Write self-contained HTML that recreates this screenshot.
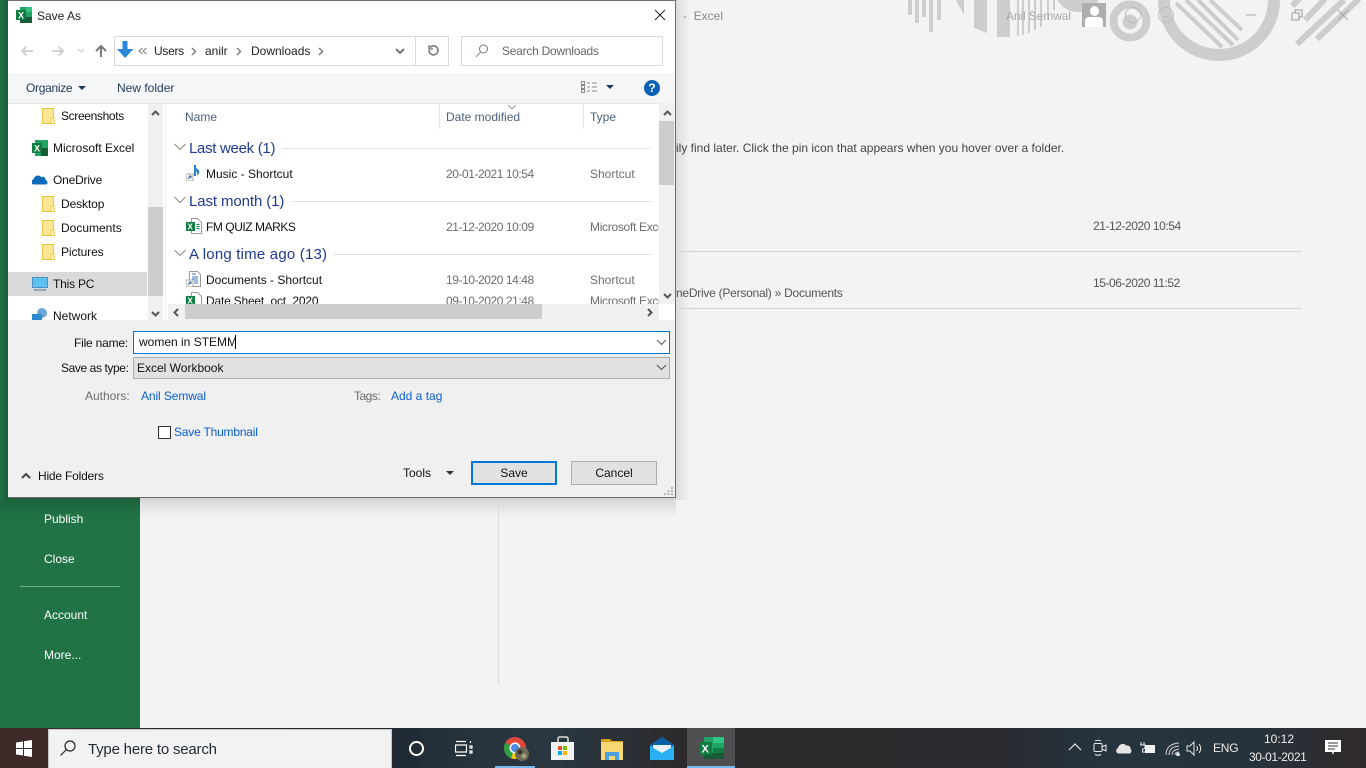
<!DOCTYPE html>
<html><head><meta charset="utf-8"><title>Save As</title>
<style>
html,body{margin:0;padding:0;width:1366px;height:768px;overflow:hidden;background:#f3f3f3;font-family:"Liberation Sans",sans-serif;font-size:12px;color:#222}
div,svg{position:absolute}
.t{position:absolute;white-space:nowrap;line-height:16px;height:16px}
.g{color:#6d6d6d}.b{color:#0a5fd0}.h{color:#1f3a93;font-size:15px;line-height:18px;height:18px}
.d{letter-spacing:-.44px}
.w{color:#fff}
.l{position:absolute;height:1px;background:#e2e2e2}
.btn{position:absolute;background:#e1e1e1;box-sizing:border-box;text-align:center;line-height:20px}
</style></head><body>

<!-- Excel backstage -->
<div style="left:0;top:0;width:140px;height:728px;background:#217346"></div>
<div style="left:140px;top:497px;width:536px;height:20px;background:linear-gradient(#d4d4d4,#f3f3f3)"></div>
<div style="left:0;top:497px;width:140px;height:20px;background:linear-gradient(#1b5f3a,#217346)"></div>
<div style="left:676px;top:0;width:14px;height:500px;background:linear-gradient(90deg,#dcdcdc,#f3f3f3)"></div>
<div style="left:0;top:0;width:8px;height:500px;background:linear-gradient(90deg,#217346,#1a5c38)"></div>
<div class="t w" style="left:44px;top:511px">Publish</div>
<div class="t w" style="left:44px;top:551px">Close</div>
<div style="left:20px;top:586px;width:100px;height:1px;background:#6fae8c"></div>
<div class="t w" style="left:44px;top:607px">Account</div>
<div class="t w" style="left:44px;top:647px">More...</div>
<div style="left:498px;top:497px;width:1px;height:188px;background:#dcdcdc"></div>

<svg style="left:900px;top:0" width="466" height="70" fill="#cdcdcd">
<rect x="8" width="4" height="15"/><rect x="15" width="4" height="23"/><rect x="22" width="4" height="17"/><rect x="29" width="4" height="32"/><rect x="37" width="4" height="20"/>
<path d="M56 0h8v15zM74 0h13v33l-13-5zM97 0h13v37h-13zM117 0h2v36h-2zM122 0h2v35h-2zM128 0h2v33h-2zM134 0h2v30h-2zM140 0h2v27h-2zM147 0h2v20h-2zM153 0h2v10h-2z"/>
<circle cx="178" cy="-12" r="24"/>
<circle cx="230" cy="21" r="16.500" fill="none" stroke="#cdcdcd" stroke-width="8"/><circle cx="230" cy="22" r="7.500"/>
<circle cx="319" cy="0" r="55" fill="none" stroke="#cdcdcd" stroke-width="12"/>
<g stroke="#cdcdcd" stroke-width="4" fill="none"><path d="M276 3l46 44M286 0l47 45M298 0l40 40M310 0l32 30"/></g>
<g stroke="#cdcdcd" stroke-width="6" fill="none"><path d="M392 6l8-8M405 20l20-21M397 44l47-44M417 39l42-40"/></g>
</svg>
<div class="t" style="left:683px;top:8px;color:#8a8a8a">- &nbsp;Excel</div>
<div class="t" style="left:1006px;top:8px;color:#aaa;letter-spacing:-.1px">Anil Semwal</div>
<div style="left:1082px;top:3px;width:24px;height:24px;background:#aeaeae;overflow:hidden"><div style="left:8px;top:3px;width:9px;height:10px;border-radius:50%;background:#fff"></div><div style="left:3px;top:14px;width:18px;height:10px;background:#fff;border-radius:4px 4px 0 0"></div></div>
<svg style="left:1120px;top:5px" width="230" height="22" fill="none" stroke="#bdbdbd"><circle cx="13" cy="10" r="7.500"/><circle cx="46" cy="10" r="7.500"/><path d="M42 13q4-3 8 0"/><path d="M126 10h10" stroke="#aaa"/><path d="M172 8h7v7h-7zM175 8V5h7v7h-3" stroke="#999"/><path d="M218 5l10 10M228 5l-10 10" stroke="#aaa"/></svg>

<div class="t" style="left:676px;top:140px;color:#444">ily find later. Click the pin icon that appears when you hover over a folder.</div>
<div class="t d" style="left:1093px;top:218px;color:#555">21-12-2020 10:54</div>
<div class="l" style="left:676px;top:251px;width:626px;background:#d4d4d4"></div>
<div class="t" style="left:676px;top:285px;color:#555;letter-spacing:-.25px">neDrive (Personal) » Documents</div>
<div class="t d" style="left:1093px;top:275px;color:#555">15-06-2020 11:52</div>
<div class="l" style="left:676px;top:308px;width:626px;background:#d4d4d4"></div>

<!-- Dialog -->
<div style="left:8px;top:0;width:668px;height:498px;background:#fff;box-sizing:border-box;border:1px solid #6b6b6b;border-left:0;border-top:1px solid #707070;border-bottom:1px solid #6b6b6b"></div>
<svg style="left:16px;top:7px" width="16" height="16"><rect x="4" width="12" height="16" fill="#21a366"/><rect x="10" width="6" height="5" fill="#33c481"/><rect x="10" y="5" width="6" height="5" fill="#21a366"/><rect x="4" y="10" width="12" height="6" fill="#185c37"/><rect x="0" y="3" width="10" height="10" fill="#107c41"/><text x="2" y="11.500" font-size="9" font-weight="700" fill="#fff" font-family="Liberation Sans">X</text></svg>
<div class="t" style="left:37px;top:8px">Save As</div>
<svg style="left:654px;top:9px" width="12" height="12" stroke="#222" fill="none"><path d="M1 1l10 10M11 1L1 11"/></svg>

<svg style="left:18px;top:42px" width="92" height="18" fill="none"><path d="M4 9h11M8.500 4.500L4 9l4.500 4.500" stroke="#d2d2d2" stroke-width="2"/><path d="M34 9h11M40.500 4.500L45 9l-4.500 4.500" stroke="#d2d2d2" stroke-width="2"/><path d="M60 7l3 3 3-3" stroke="#d8d8d8" stroke-width="1.500"/><path d="M83 15V4M78 9l5-5 5 5" stroke="#7a7a7a" stroke-width="2"/></svg>
<div style="left:114px;top:36px;width:335px;height:30px;box-sizing:border-box;border:1px solid #d9d9d9"></div>
<div style="left:415px;top:36px;width:1px;height:30px;background:#d9d9d9"></div>
<svg style="left:117px;top:41px" width="17" height="18"><path d="M5.500 0h5v8h6L8 17 0 8h5.500z" fill="#2b88d8"/></svg>
<svg style="left:138px;top:47px" width="10" height="9" fill="none" stroke="#777"><path d="M4.500 1L1 4l3.500 3M8.500 1L5 4l3.500 3"/></svg>
<div class="t" style="left:154px;top:43px;letter-spacing:-.3px">Users</div>
<svg style="left:191px;top:47px" width="6" height="9" fill="none" stroke="#808080" stroke-width="1.500"><path d="M1 1l3.500 3.500L1 8"/></svg>
<div class="t" style="left:205px;top:43px">anilr</div>
<svg style="left:236px;top:47px" width="6" height="9" fill="none" stroke="#808080" stroke-width="1.500"><path d="M1 1l3.500 3.500L1 8"/></svg>
<div class="t" style="left:251px;top:43px">Downloads</div>
<svg style="left:318px;top:47px" width="6" height="9" fill="none" stroke="#808080" stroke-width="1.500"><path d="M1 1l3.500 3.500L1 8"/></svg>
<svg style="left:395px;top:48px" width="10" height="7" fill="none" stroke="#666" stroke-width="1.700"><path d="M1 1l4 4 4-4"/></svg>
<svg style="left:427px;top:44px" width="12" height="14" fill="none" stroke="#707070" stroke-width="1.500"><path d="M3 3.500a4.500 4.500 0 1 1-1 2.500"/><path d="M2 1v4h4" stroke-width="1.200"/></svg>
<div style="left:461px;top:36px;width:202px;height:30px;box-sizing:border-box;border:1px solid #d9d9d9"></div>
<svg style="left:475px;top:44px" width="14" height="14" fill="none" stroke="#777"><circle cx="8.500" cy="5" r="4"/><path d="M5.500 8L1 13" stroke="#a08a80"/></svg>
<div class="t" style="left:502px;top:43px;color:#666;letter-spacing:-.25px">Search Downloads</div>

<div style="left:8px;top:73px;width:667px;height:30px;background:#f5f6f7;border-bottom:1px solid #e5e5e5"></div>
<div class="t" style="left:26px;top:80px;color:#1e395b;letter-spacing:-.3px">Organize</div>
<svg style="left:78px;top:86px" width="9" height="5"><path d="M0 0h8L4 4z" fill="#1e395b"/></svg>
<div class="t" style="left:117px;top:80px;color:#1e395b">New folder</div>
<svg style="left:581px;top:81px" width="17" height="13" fill="none" stroke="#8a8a8a"><rect x=".5" y=".5" width="3" height="3"/><rect x=".5" y="4.500" width="3" height="3"/><rect x=".5" y="8.500" width="3" height="3"/><path d="M6 2h3M11 2h5M6 6h3M11 6h5M6 10h3M11 10h5"/></svg>
<svg style="left:606px;top:85px" width="9" height="5"><path d="M0 0h8L4 4z" fill="#1e395b"/></svg>
<div style="left:644px;top:80px;width:16px;height:16px;border-radius:50%;background:#0b63b5;color:#fff;font-weight:700;font-size:12px;text-align:center;line-height:16px">?</div>

<!-- Nav pane -->
<div style="left:8px;top:272px;width:139px;height:24px;background:#d9d9d9"></div>
<div style="left:148px;top:104px;width:15px;height:216px;background:#f0f0f0"></div>
<div style="left:148px;top:207px;width:15px;height:89px;background:#cdcdcd"></div>
<div style="left:165px;top:104px;width:1px;height:216px;background:#efefef"></div>
<svg style="left:151px;top:110px" width="9" height="6" fill="none" stroke="#555" stroke-width="2"><path d="M1 5l3.500-3.500L8 5"/></svg>
<svg style="left:151px;top:311px" width="9" height="6" fill="none" stroke="#555" stroke-width="2"><path d="M1 1l3.500 3.500L8 1"/></svg>

<svg style="left:42px;top:108px" width="14" height="16"><path d="M.5.500h11v15H.500z" fill="#ffe792" stroke="#e8c24f"/><path d="M9 10h3.500v5.500H9z" fill="#fff0b8" stroke="#e8c24f" stroke-width=".7"/></svg>
<div class="t" style="left:61px;top:108px;color:#111;letter-spacing:-.35px">Screenshots</div>
<svg style="left:32px;top:140px" width="16" height="16"><rect x="3" width="13" height="16" fill="#21a366"/><rect x="9" y="8" width="7" height="8" fill="#185c37"/><rect y="3" width="10" height="10" fill="#107c41"/><text x="2" y="11.500" font-size="9" font-weight="700" fill="#fff" font-family="Liberation Sans">X</text></svg>
<div class="t" style="left:53px;top:140px;color:#111">Microsoft Excel</div>
<svg style="left:32px;top:174px" width="16" height="11"><path d="M2 10.500a2.500 2.500 0 0 1-.5-5C2 2 7 0 9 3c3-1 5 1 4.500 3 2 0 3 4 .5 4.500z" fill="#0f6cbd"/></svg>
<div class="t" style="left:53px;top:172px;color:#111;letter-spacing:-.2px">OneDrive</div>
<svg style="left:42px;top:196px" width="14" height="16"><path d="M.5.500h11v15H.500z" fill="#ffe792" stroke="#e8c24f"/><path d="M9 10h3.500v5.500H9z" fill="#fff0b8" stroke="#e8c24f" stroke-width=".7"/></svg>
<div class="t" style="left:61px;top:196px;color:#111;letter-spacing:-.1px">Desktop</div>
<svg style="left:42px;top:220px" width="14" height="16"><path d="M.5.500h11v15H.500z" fill="#ffe792" stroke="#e8c24f"/><path d="M9 10h3.500v5.500H9z" fill="#fff0b8" stroke="#e8c24f" stroke-width=".7"/></svg>
<div class="t" style="left:61px;top:220px;color:#111">Documents</div>
<svg style="left:42px;top:244px" width="14" height="16"><path d="M.5.500h11v15H.500z" fill="#ffe792" stroke="#e8c24f"/><path d="M9 10h3.500v5.500H9z" fill="#fff0b8" stroke="#e8c24f" stroke-width=".7"/></svg>
<div class="t" style="left:61px;top:244px;color:#111;letter-spacing:-.1px">Pictures</div>
<svg style="left:32px;top:277px" width="16" height="15"><rect x=".5" y=".5" width="15" height="10" fill="#5cc0f0" stroke="#4a90c0"/><path d="M2 13h12" stroke="#7a93a8" stroke-width="1.500"/></svg>
<div class="t" style="left:53px;top:276px;color:#111;letter-spacing:-.2px">This PC</div>
<div style="left:32px;top:308px;width:16px;height:12px;overflow:hidden"><svg style="left:0;top:0" width="16" height="14"><circle cx="10" cy="5" r="5" fill="#6fa8d8"/><rect y="6" width="10" height="8" fill="#2e8ad0"/></svg></div>
<div class="t" style="left:53px;top:308px;color:#111">Network</div>

<!-- List -->
<div class="t" style="left:185px;top:109px;color:#4c607a">Name</div>
<div style="left:439px;top:104px;width:1px;height:25px;background:#e5e5e5"></div>
<div class="t" style="left:446px;top:109px;color:#4c607a">Date modified</div>
<svg style="left:507px;top:105px" width="10" height="5" fill="none" stroke="#999"><path d="M1 0l4 4 4-4"/></svg>
<div style="left:583px;top:104px;width:1px;height:25px;background:#e5e5e5"></div>
<div class="t" style="left:590px;top:109px;color:#4c607a">Type</div>

<svg style="left:174px;top:143px" width="12" height="8" fill="none" stroke="#8a8a8a"><path d="M.5 1l5.500 5.500L11.500 1"/></svg>
<div class="t h" style="left:189px;top:140px;letter-spacing:-.3px">Last week (1)</div>
<div class="l" style="left:282px;top:148px;width:369px"></div>
<svg style="left:186px;top:164px" width="16" height="17"><path d="M9 1v11" stroke="#2a7fd0" stroke-width="2"/><path d="M9 1q1 4 4 5q1 3-2 6q1-4-2-6z" fill="#2a7fd0"/><rect y="10" width="7" height="7" fill="#fff" stroke="#aaa"/><path d="M2 15l3-3M3 12h2v2" stroke="#2a5fa0" fill="none"/></svg>
<div class="t" style="left:206px;top:166px;color:#111">Music - Shortcut</div>
<div class="t g d" style="left:446px;top:166px">20-01-2021 10:54</div>
<div class="t g" style="left:590px;top:166px">Shortcut</div>

<svg style="left:174px;top:196px" width="12" height="8" fill="none" stroke="#8a8a8a"><path d="M.5 1l5.500 5.500L11.500 1"/></svg>
<div class="t h" style="left:189px;top:193px;letter-spacing:-.1px">Last month (1)</div>
<div class="l" style="left:291px;top:201px;width:360px"></div>
<svg style="left:186px;top:218px" width="16" height="16"><path d="M5.500.500h6l4 4v11h-10z" fill="#fff" stroke="#9a9a9a"/><rect y="4" width="9" height="9" fill="#107c41"/><text x="1.500" y="11.500" font-size="8" font-weight="700" fill="#fff" font-family="Liberation Sans">X</text><path d="M10.500 6.500h3M10.500 8.500h3M10.500 10.500h3" stroke="#107c41"/></svg>
<div class="t" style="left:206px;top:219px;color:#111;letter-spacing:-.45px">FM QUIZ MARKS</div>
<div class="t g d" style="left:446px;top:219px">21-12-2020 10:09</div>
<div style="left:590px;top:219px;width:69px;height:16px;overflow:hidden"><div class="t g" style="left:0;top:0;letter-spacing:-.3px">Microsoft Excel Worksheet</div></div>

<svg style="left:174px;top:249px" width="12" height="8" fill="none" stroke="#8a8a8a"><path d="M.5 1l5.500 5.500L11.500 1"/></svg>
<div class="t h" style="left:189px;top:246px;letter-spacing:.2px">A long time ago (13)</div>
<div class="l" style="left:334px;top:254px;width:317px"></div>
<svg style="left:186px;top:271px" width="16" height="16"><path d="M3.500.500h8l3 3v12h-11z" fill="#fff" stroke="#9a9a9a"/><path d="M6 3h4M6 6h6M6 8h6M8 10h4M8 12h4" stroke="#3a78c0"/><rect y="9" width="7" height="7" fill="#fff" stroke="#aaa"/><path d="M2 14l3-3M3 11h2v2" stroke="#2a5fa0" fill="none"/></svg>
<div class="t" style="left:206px;top:272px;color:#111">Documents - Shortcut</div>
<div class="t g d" style="left:446px;top:272px">19-10-2020 14:48</div>
<div class="t g" style="left:590px;top:272px">Shortcut</div>

<div style="left:168px;top:290px;width:491px;height:14px;overflow:hidden">
<svg style="left:18px;top:2px" width="16" height="16"><path d="M5.500.500h6l4 4v11h-10z" fill="#fff" stroke="#9a9a9a"/><rect y="4" width="9" height="9" fill="#107c41"/><text x="1.500" y="11.500" font-size="8" font-weight="700" fill="#fff" font-family="Liberation Sans">X</text></svg>
<div class="t" style="left:38px;top:3px;color:#111;letter-spacing:-.2px">Date Sheet_oct_2020</div>
<div class="t g d" style="left:278px;top:3px">09-10-2020 21:48</div>
<div style="left:422px;top:3px;width:69px;height:16px;overflow:hidden"><div class="t g" style="left:0;top:0;letter-spacing:-.3px">Microsoft Excel Worksheet</div></div>
</div>

<div style="left:659px;top:103px;width:16px;height:201px;background:#f0f0f0"></div>
<div style="left:659px;top:121px;width:15px;height:64px;background:#cdcdcd"></div>
<svg style="left:663px;top:110px" width="9" height="6" fill="none" stroke="#555" stroke-width="2"><path d="M1 5l3.500-3.500L8 5"/></svg>
<svg style="left:663px;top:293px" width="9" height="6" fill="none" stroke="#555" stroke-width="2"><path d="M1 1l3.500 3.500L8 1"/></svg>
<div style="left:168px;top:304px;width:491px;height:16px;background:#f0f0f0"></div>
<div style="left:185px;top:304px;width:357px;height:15px;background:#cdcdcd"></div>
<svg style="left:173px;top:308px" width="6" height="9" fill="none" stroke="#555" stroke-width="2"><path d="M5 1L1.500 4.500 5 8"/></svg>
<svg style="left:647px;top:308px" width="6" height="9" fill="none" stroke="#555" stroke-width="2"><path d="M1 1l3.500 3.500L1 8"/></svg>

<!-- Bottom panel -->
<div style="left:8px;top:320px;width:667px;height:177px;background:#f0f0f0"></div>
<div class="t" style="left:74px;top:335px;color:#111;letter-spacing:-.2px">File name:</div>
<div style="left:133px;top:331px;width:537px;height:23px;box-sizing:border-box;border:1px solid #0078d7;background:#fff"></div>
<div class="t" style="left:139px;top:334px;color:#111">women in STEMM</div>
<div style="left:235px;top:335px;width:1px;height:14px;background:#000"></div>
<svg style="left:656px;top:339px" width="11" height="7" fill="none" stroke="#555"><path d="M1 1l4.500 4.500L10 1"/></svg>
<div class="t" style="left:61px;top:360px;color:#111;letter-spacing:-.4px">Save as type:</div>
<div style="left:133px;top:357px;width:537px;height:22px;box-sizing:border-box;border:1px solid #adadad;background:#e1e1e1"></div>
<div class="t" style="left:137px;top:360px;color:#111">Excel Workbook</div>
<svg style="left:656px;top:364px" width="11" height="7" fill="none" stroke="#555"><path d="M1 1l4.500 4.500L10 1"/></svg>
<div class="t" style="left:85px;top:388px;color:#6d6d6d">Authors:</div>
<div class="t b" style="left:141px;top:388px;letter-spacing:-.1px">Anil Semwal</div>
<div class="t" style="left:354px;top:388px;color:#6d6d6d;letter-spacing:-.5px">Tags:</div>
<div class="t b" style="left:391px;top:388px">Add a tag</div>
<div style="left:158px;top:426px;width:13px;height:13px;box-sizing:border-box;border:1px solid #333;background:#fff"></div>
<div class="t b" style="left:174px;top:424px;letter-spacing:-.2px">Save Thumbnail</div>
<svg style="left:21px;top:472px" width="10" height="7" fill="none" stroke="#444" stroke-width="2"><path d="M1 6l4-4 4 4"/></svg>
<div class="t" style="left:38px;top:468px;color:#111;letter-spacing:-.2px">Hide Folders</div>
<div class="t" style="left:403px;top:465px;color:#111">Tools</div>
<svg style="left:446px;top:471px" width="9" height="5"><path d="M0 0h8L4 4z" fill="#333"/></svg>
<div class="btn" style="left:471px;top:461px;width:86px;height:24px;border:2px solid #0078d7;color:#111">Save</div>
<div class="btn" style="left:571px;top:461px;width:86px;height:24px;border:1px solid #adadad;line-height:22px;color:#111">Cancel</div>
<svg style="left:664px;top:487px" width="10" height="9" fill="#b5b5b5"><rect x="7" width="2" height="2"/><rect x="3.500" y="3" width="2" height="2"/><rect x="7" y="3" width="2" height="2"/><rect y="6" width="2" height="2"/><rect x="3.500" y="6" width="2" height="2"/><rect x="7" y="6" width="2" height="2"/></svg>

<!-- Taskbar -->
<div style="left:0;top:728px;width:1366px;height:40px;background:linear-gradient(90deg,#3f2a2a 0,#3f2a2a 48px,#1f2933 392px,#27353f 480px,#2a3640 560px,#2c2a2c 680px,#292a2e 1000px,#25343f 1100px,#26333c 1250px,#30292a 1366px)"></div>
<svg style="left:16px;top:740px" width="17" height="17" fill="#fff"><path d="M0 2.500l7-1v6.500H0zM8 1.300L16 0v8H8zM0 9h7v6.500l-7-1zM8 9h8v8l-8-1.300z"/></svg>
<div style="left:48px;top:729px;width:344px;height:39px;background:#f2f2f2;box-sizing:border-box;border:1px solid #c8c8c8;border-bottom:0"></div>
<svg style="left:59px;top:739px" width="18" height="18" fill="none" stroke="#222" stroke-width="1.200"><circle cx="11" cy="7" r="5"/><path d="M7.500 10.500L1.500 16.500"/></svg>
<div class="t" style="left:88px;top:741px;font-size:15px;line-height:18px;height:18px;color:#1f2a36;letter-spacing:-.2px">Type here to search</div>
<svg style="left:408px;top:740px" width="17" height="17" fill="none" stroke="#fff" stroke-width="2"><circle cx="8.500" cy="8.500" r="6.500"/></svg>
<svg style="left:455px;top:740px" width="18" height="17" fill="none" stroke="#fff" stroke-width="1.200"><path d="M1 1.500h10M1 15.500h10M.5 5h11v7H.500zM15.500 1v2M15 6h2v2h-2zM15 11h2v2h-2z"/></svg>
<svg style="left:503px;top:736px" width="26" height="26"><circle cx="12" cy="12" r="11" fill="#e2493b"/><path d="M12 12L2.500 6.500A11 11 0 0 0 8 22.300z" fill="#2f9e44"/><path d="M12 12l-4 10.300A11 11 0 0 0 23 12z" fill="#f5c518"/><circle cx="12" cy="12" r="5.500" fill="#fff"/><circle cx="12" cy="12" r="4" fill="#4a8be8"/><circle cx="19" cy="18" r="7" fill="#6d6a58"/><circle cx="17" cy="16" r="2.500" fill="#3a3626"/><circle cx="21" cy="20" r="2.500" fill="#a89f83"/></svg>
<div style="left:495px;top:766px;width:40px;height:2px;background:#76b9ed"></div>
<svg style="left:551px;top:736px" width="24" height="24"><path d="M7 7V3q0-2 2-2h6q2 0 2 2v4" fill="none" stroke="#ddd" stroke-width="1.500"/><rect y="6" width="23" height="18" fill="#f2f2f2"/><rect x="7" y="10" width="4" height="4" fill="#f25022"/><rect x="12" y="10" width="4" height="4" fill="#7fba00"/><rect x="7" y="15" width="4" height="4" fill="#00a4ef"/><rect x="12" y="15" width="4" height="4" fill="#ffb900"/></svg>
<svg style="left:601px;top:738px" width="24" height="22"><path d="M0 1h9l2 2h11v4H0z" fill="#d9a21b"/><rect y="4" width="22" height="18" fill="#f7d774"/><path d="M4 14h14v8h-4v-4H8v4H4z" fill="#4c9fe0"/></svg>
<svg style="left:650px;top:737px" width="24" height="24"><path d="M0 8L12 0l12 8v15H0z" fill="#1e9be8"/><path d="M12 0l12 8-12 8L0 8z" fill="#0a5fa8"/><path d="M3 8h18v3l-9 6-9-6z" fill="#e8f3fb"/><path d="M0 9l12 7 12-7v14H0z" fill="#2ab0f5"/></svg>
<div style="left:687px;top:728px;width:48px;height:40px;background:#4f4f52"></div>
<div style="left:687px;top:766px;width:48px;height:2px;background:#76b9ed"></div>
<svg style="left:699px;top:737px" width="25" height="22"><rect x="5" width="20" height="22" rx="1" fill="#21a366"/><rect x="14" width="11" height="6" fill="#33c481"/><rect x="14" y="11" width="11" height="6" fill="#107c41"/><rect x="5" y="16" width="20" height="6" fill="#185c37"/><rect y="5" width="13" height="13" fill="#107c41"/><text x="2.500" y="15.500" font-size="11" font-weight="700" fill="#fff" font-family="Liberation Sans">X</text></svg>

<svg style="left:1068px;top:742px" width="14" height="10" fill="none" stroke="#e8e8e8" stroke-width="1.200"><path d="M1 8l6-6 6 6"/></svg>
<svg style="left:1093px;top:739px" width="14" height="18" fill="none" stroke="#e8e8e8"><rect x="1" y="4.500" width="8" height="8" rx="1"/><path d="M9 8l4-2v6l-4-2M2 2q3-1.500 6 0M2 15.500q3 1.500 6 0"/></svg>
<svg style="left:1115px;top:743px" width="17" height="11"><path d="M3 10.500a3 3 0 0 1 0-5.500C4 1 9-.5 11 2.500c3-.5 5 2 4.500 3.500 1.500 1 1 4.500-1 4.500z" fill="#e6e6e6"/></svg>
<svg style="left:1139px;top:741px" width="17" height="14" fill="none" stroke="#f0f0f0"><path d="M2 1v3M5 1v3M1 4h5v2q0 2-2.500 2M3.500 8v3h3"/><rect x="6.500" y="4.500" width="9" height="7" fill="#f0f0f0"/></svg>
<svg style="left:1165px;top:742px" width="15" height="14" fill="none" stroke="#cfcfcf"><path d="M1 13q0-11 13-12M4 13q0-8 10-9M7 13q0-5 7-6M10 13q0-3 4-3"/><circle cx="13" cy="12.500" r="1.500" fill="#fff"/></svg>
<svg style="left:1186px;top:741px" width="17" height="15" fill="none" stroke="#e8e8e8"><path d="M1 5h3l4-4v13l-4-4H1zM10.500 5q2 2.500 0 5M13 3q3.500 4.500 0 9"/></svg>
<div class="t w" style="left:1213px;top:740px;font-size:12px;color:#eee;letter-spacing:-.2px">ENG</div>
<div class="t w" style="left:1264px;top:731px;font-size:12px;color:#eee">10:12</div>
<div class="t w" style="left:1249px;top:749px;font-size:12px;color:#eee;letter-spacing:-.4px">30-01-2021</div>
<svg style="left:1325px;top:740px" width="16" height="17"><path d="M0 0h16v12H9l-1 3-1-3H0z" fill="#fff"/><path d="M3 3h10M3 6h10M3 9h7" stroke="#333"/></svg>
</body></html>
